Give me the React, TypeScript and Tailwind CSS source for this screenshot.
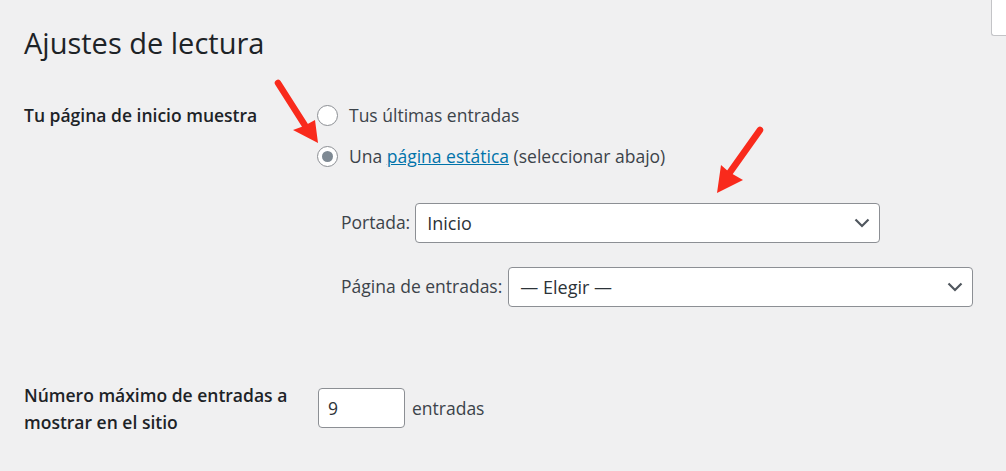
import React from "react";

const font = "font-['Open_Sans','Noto_Sans',sans-serif]";

const Chevron = () => (
  <svg width="16" height="10" viewBox="0 0 16 10" fill="none" className="shrink-0">
    <path d="M1.5 1.5 8 8l6.5-6.5" stroke="#50575e" strokeWidth="2.2" />
  </svg>
);

const Radio = ({ checked = false }: { checked?: boolean }) => (
  <span className="flex h-[21px] w-[21px] shrink-0 items-center justify-center rounded-full border border-[#8c8f94] bg-white">
    {checked && <span className="h-[11px] w-[11px] rounded-full bg-[#7e8993]" />}
  </span>
);

const Select = ({ label }: { label: string }) => (
  <div className="flex h-10 w-[465px] items-center justify-between rounded-[4px] border border-[#8c8f94] bg-white pl-[11px] pr-[9px] text-[18px] text-[#2c3338]">
    <span className="pt-px">{label}</span>
    <Chevron />
  </div>
);

const App = () => {
  return (
    <div className={`relative h-[471px] w-[1006px] overflow-hidden bg-[#f0f0f1] pl-6 text-[17.5px] text-[#3c434a] ${font}`}>
      <div className="absolute right-0 top-0 h-[36px] w-[15px] rounded-bl-[3px] border-b border-l border-[#c3c4c7] bg-white" />

      <h1 className="pt-[22px] text-[29px] leading-[42px] text-[#1d2327]">Ajustes de lectura</h1>

      <div className="mt-[39px] flex">
        <div className="w-[293px] font-semibold leading-[24px] text-[#1d2327]">Tu página de inicio muestra</div>
        <div>
          <div className="flex h-[24px] items-center gap-[11px]">
            <Radio />
            <span>Tus últimas entradas</span>
          </div>
          <div className="mt-[17px] flex h-[24px] items-center gap-[11px]">
            <Radio checked />
            <span>
              Una <span className="text-[#0073aa] underline">página estática</span> (seleccionar abajo)
            </span>
          </div>
          <div className="mt-[35px] flex items-center gap-[5px] pl-6">
            <span className="pb-px">Portada:</span>
            <Select label="Inicio" />
          </div>
          <div className="mt-6 flex items-center gap-[6px] pl-6">
            <span className="pb-px">Página de entradas:</span>
            <Select label="— Elegir —" />
          </div>
        </div>
      </div>

      <div className="mt-[75px] flex">
        <div className="w-[294px] font-semibold leading-[27px] text-[#1d2327]">
          Número máximo de entradas a mostrar en el sitio
        </div>
        <div className="mt-[6px] flex items-center gap-[7px] self-start">
          <div className="flex h-10 w-[87px] items-center rounded-[4px] border border-[#8c8f94] bg-white pl-[9px] text-[#2c3338]">9</div>
          <span>entradas</span>
        </div>
      </div>

      <svg className="absolute left-0 top-0" width="1006" height="471" viewBox="0 0 1006 471" fill="none">
        <path d="M278 83 306 127" stroke="#f92a1c" strokeWidth="6.5" strokeLinecap="round" />
        <path d="M318 143 293 130 304 126 315 120Z" fill="#f92a1c" />
        <path d="M760 130 728 175" stroke="#f92a1c" strokeWidth="6.5" strokeLinecap="round" />
        <path d="M717 193 721 165 729 172 743 180Z" fill="#f92a1c" />
      </svg>
    </div>
  );
};

export default App;
